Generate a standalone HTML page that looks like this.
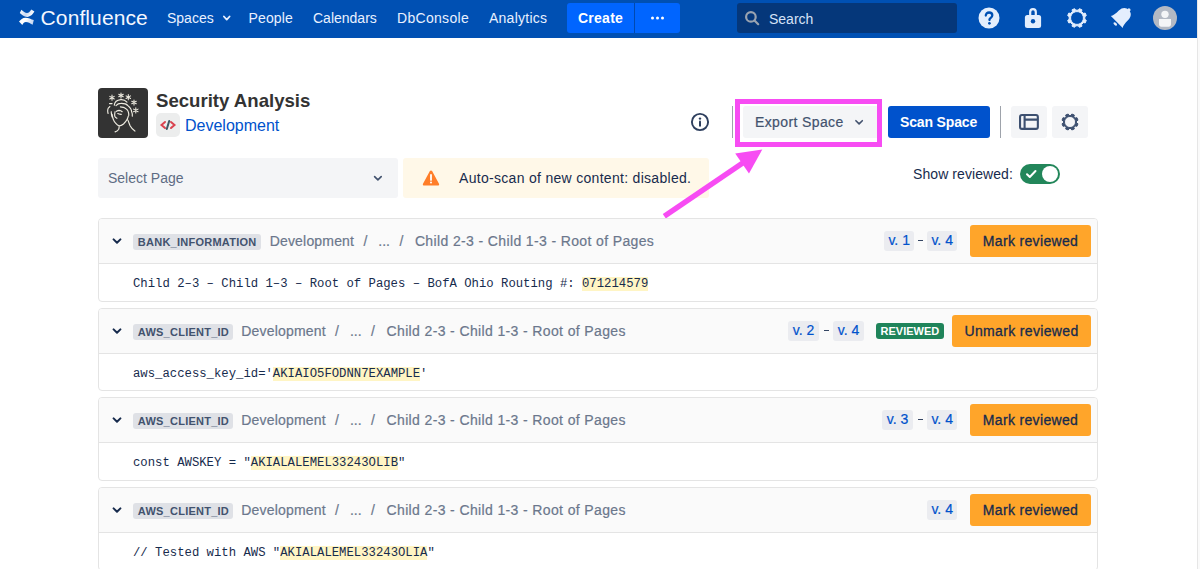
<!DOCTYPE html>
<html><head><meta charset="utf-8">
<style>
*{box-sizing:border-box;margin:0;padding:0}
html,body{width:1200px;height:569px;overflow:hidden;background:#fff;font-family:"Liberation Sans",sans-serif;color:#172B4D}
.a{position:absolute;white-space:nowrap}
#nav{position:absolute;left:0;top:0;width:1197px;height:38px;background:#0050B3}
#sb{position:absolute;left:1197px;top:0;width:3px;height:569px;background:#FAFAFA;border-left:1px solid #E6E6E6}
.nt{position:absolute;font-size:14px;line-height:16px;top:10px;color:#E9F0FF}
.card{position:absolute;left:98px;width:1000px;border:1px solid #E4E4E4;border-radius:4px;background:#fff;overflow:hidden}
.ch{position:absolute;left:0;top:0;width:998px;height:45px;background:#FAFAFA;border-bottom:1px solid #E4E4E4}
.tag{position:absolute;left:34px;top:15px;height:16px;background:#DFE1E6;border-radius:3px;font-size:11px;font-weight:bold;color:#42526E;line-height:16px;padding-left:4.8px;letter-spacing:.25px;white-space:nowrap}
.bc{position:absolute;top:14px;font-size:14px;line-height:16px;color:#6B778C;-webkit-text-stroke:.2px #6B778C;white-space:nowrap}
.code{position:absolute;left:34px;top:57.5px;font-family:"Liberation Mono",monospace;font-size:12.27px;line-height:14px;color:#172B4D;white-space:nowrap}
.hl{background:#FFF5C4}
.ver{position:absolute;top:12px;height:20px;background:#EBECF0;border-radius:3px;color:#0052CC;font-size:14px;line-height:18px;padding:0 4.4px;-webkit-text-stroke:.2px #0052CC;white-space:nowrap}
.dash{position:absolute;top:20.5px;width:5px;height:1.8px;background:#344563}
.rev{position:absolute;left:777px;top:14px;width:67.8px;height:16px;background:#1F845A;border-radius:3px;color:#fff;font-size:11px;font-weight:bold;line-height:16px;text-align:center}
.mark{position:absolute;top:6px;height:32px;background:#FFA52A;border-radius:3px;font-size:14px;letter-spacing:.34px;line-height:33px;-webkit-text-stroke:.3px #172B4D;color:#172B4D;text-align:center;white-space:nowrap}
.chev{position:absolute;left:13px;top:19px}
</style></head><body>
<div id="nav">
  <!-- logo -->
  <svg class="a" style="left:18px;top:8px" width="18" height="18" viewBox="0 0 18 18">
    <defs><linearGradient id="lg1" x1="0" y1="0" x2="1" y2="0.3"><stop offset="0" stop-color="#fff"/><stop offset=".55" stop-color="#C9D9F2"/><stop offset="1" stop-color="#fff"/></linearGradient>
    <linearGradient id="lg2" x1="0" y1="0" x2="1" y2="0.3"><stop offset="0" stop-color="#fff"/><stop offset=".5" stop-color="#fff"/><stop offset="1" stop-color="#C9D9F2"/></linearGradient></defs>
    <path d="M3.4 1.8 C5.5 3.6 7 5 9 5 C10.8 5 12 3.5 13.4 1.6 L16.4 3.6 C14.6 6.4 12.6 8.9 9.2 8.9 C5.8 8.9 3.6 6.8 1.8 5 Z" fill="url(#lg1)"/>
    <path d="M1 13.6 C2.6 11.5 4.6 9.7 7.5 9.7 C10.6 9.7 13 11.2 15.8 12.1 L14.6 16.8 C12 15.4 10.2 14 7.9 14 C6.3 14 5.2 15.2 4.3 16.9 Z" fill="url(#lg2)"/>
  </svg>
  <div class="a" style="left:40.6px;top:6px;font-size:21px;line-height:24px;letter-spacing:.1px;color:#F4F7FF">Confluence</div>
  <div class="nt" style="left:167px">Spaces</div>
  <svg class="a" style="left:222px;top:14px" width="10" height="8" viewBox="0 0 10 8"><path d="M1.9 2.5 4.75 5.6 7.6 2.5" stroke="#E9F0FF" stroke-width="1.8" fill="none" stroke-linecap="round" stroke-linejoin="round"/></svg>
  <div class="nt" style="left:248.5px;letter-spacing:.15px">People</div>
  <div class="nt" style="left:313px">Calendars</div>
  <div class="nt" style="left:397px;letter-spacing:.3px">DbConsole</div>
  <div class="nt" style="left:489px;letter-spacing:.25px">Analytics</div>
  <div class="a" style="left:567px;top:3px;width:113px;height:30px;background:#0065FF;border-radius:3px"></div>
  <div class="a" style="left:634px;top:3px;width:1px;height:30px;background:#0049B0"></div>
  <div class="a" style="left:578px;top:10px;font-size:14px;line-height:16px;font-weight:bold;letter-spacing:.25px;color:#fff">Create</div>
  <svg class="a" style="left:650px;top:16px" width="16" height="4" viewBox="0 0 16 4"><circle cx="2.5" cy="2" r="1.5" fill="#fff"/><circle cx="7.5" cy="2" r="1.5" fill="#fff"/><circle cx="12.5" cy="2" r="1.5" fill="#fff"/></svg>
  <div class="a" style="left:737px;top:3px;width:220px;height:30px;background:#05377A;border-radius:3px"></div>
  <svg class="a" style="left:744px;top:10px" width="16" height="16" viewBox="0 0 16 16"><circle cx="6.9" cy="6.9" r="4.8" stroke="#9AA3B0" stroke-width="2.2" fill="none"/><path d="M10.5 10.5 14.2 14.2" stroke="#9AA3B0" stroke-width="2.2" stroke-linecap="round"/></svg>
  <div class="nt" style="left:769px;top:11px;color:#D5E2F7">Search</div>
  <!-- help -->
  <svg class="a" style="left:978px;top:7px" width="22" height="22" viewBox="0 0 22 22"><circle cx="11" cy="11" r="10.5" fill="#E4EEFD"/><path d="M7.8 8.6c0-1.9 1.4-3.1 3.3-3.1s3.2 1.1 3.2 2.8c0 1.4-.8 2.1-1.7 2.7-.8.5-1.1.9-1.1 1.6v.5" stroke="#0050B3" stroke-width="2.3" fill="none" stroke-linecap="round"/><circle cx="11.4" cy="16.3" r="1.35" fill="#0050B3"/></svg>
  <!-- lock -->
  <svg class="a" style="left:1024px;top:7px" width="18" height="22" viewBox="0 0 18 22"><path d="M6.2 9V5a2.8 2.8 0 0 1 5.6 0V9" stroke="#E4EEFD" stroke-width="2.2" fill="none"/><rect x="0.9" y="8.1" width="16.2" height="13" rx="2.5" fill="#E4EEFD"/><circle cx="9" cy="14.2" r="2.2" fill="#0050B3"/></svg>
  <!-- gear -->
  <svg class="a" style="left:1066px;top:7px" width="22" height="22" viewBox="0 0 22 22"><path fill="#E4EEFD" stroke="#E4EEFD" stroke-width="1" stroke-linejoin="round" fill-rule="evenodd" d="M12.24 3.20 13.39 1.70 15.89 2.74 15.64 4.61 17.39 6.36 19.26 6.11 20.30 8.61 18.80 9.76 18.80 12.24 20.30 13.39 19.26 15.89 17.39 15.64 15.64 17.39 15.89 19.26 13.39 20.30 12.24 18.80 9.76 18.80 8.61 20.30 6.11 19.26 6.36 17.39 4.61 15.64 2.74 15.89 1.70 13.39 3.20 12.24 3.20 9.76 1.70 8.61 2.74 6.11 4.61 6.36 6.36 4.61 6.11 2.74 8.61 1.70 9.76 3.20ZM11 4.60a6.4 6.4 0 1 0 0.01 0Z"/></svg>
  <!-- bell -->
  <svg class="a" style="left:1105px;top:4px" width="30" height="28" viewBox="0 0 30 28"><g transform="translate(11.8 18) rotate(45)" fill="#E4EEFD"><path d="M-8.4 0C-7 -1.6 -6.6 -5 -6.6 -9.5C-6.6 -14.5 -3.6 -17 0 -17C3.6 -17 6.6 -14.5 6.6 -9.5C6.6 -5 7 -1.6 8.4 0Z"/><circle cx="0" cy="-17.2" r="1.6"/><ellipse cx="0.3" cy="2.5" rx="2.1" ry="1.25"/></g></svg>
  <!-- avatar -->
  <svg class="a" style="left:1153px;top:6px" width="24" height="24" viewBox="0 0 24 24"><circle cx="12" cy="12" r="12" fill="#B3B9C4"/><circle cx="12" cy="8.35" r="3.7" fill="#F4F5F7"/><path d="M6 13.1h12v5.4c0 1.2-1 2.2-2.2 2.2H8.2c-1.2 0-2.2-1-2.2-2.2z" fill="#F4F5F7"/></svg>
</div>
<div id="sb"></div>

<!-- header -->
<div class="a" style="left:98px;top:88px;width:50px;height:50px;background:#333;border-radius:4px"></div>
<svg class="a" style="left:98px;top:88px" width="50" height="50" viewBox="0 0 50 50" fill="none" stroke="#EEEBE0" stroke-width="1.15" stroke-linecap="round" stroke-linejoin="round">
  <path stroke-width="1.05" d="M14.00 7.10L14.00 12.30M11.75 8.40L16.25 11.00M16.25 8.40L11.75 11.00M23.00 4.90L23.00 10.10M20.75 6.20L25.25 8.80M25.25 6.20L20.75 8.80M30.30 6.60L30.30 11.80M28.05 7.90L32.55 10.50M32.55 7.90L28.05 10.50M36.00 11.90L36.00 17.10M33.75 13.20L38.25 15.80M38.25 13.20L33.75 15.80M37.80 19.80L37.80 25.00M35.55 21.10L40.05 23.70M40.05 21.10L35.55 23.70M11.5 15.6h2.6"/>
  <path d="M16.3 17.1C16.6 14 19 12 22.8 11.6 25.5 11.3 27.5 12.5 29 14.1M18 17.6C19.5 16 21 15.4 22.8 15.4 26 15.3 28.5 16 29.9 17.6 32 19.5 33.4 21 33.4 22.8 34.2 25 34.5 26.5 34.3 28.1M22.4 18.9C24 19.2 25.5 19.3 26.4 19.8 28.5 21 29.6 22 29.9 22.8 30.6 24.5 30.9 26 30.8 27.2M11.9 18.5C10.3 19.8 9.6 21 9.7 22 9.6 23.5 9.8 24.6 10.1 25.5M13.2 23.7C13.3 25.5 13.6 27.5 14.1 29M14.1 26.4C14.4 28.5 14.8 30.5 15.4 31.6 16 33.3 16.7 34.3 17.6 35.1 18.8 36.5 20 37.5 21.1 37.8 22.8 37.8 24.3 37 25.5 36 27 34.6 28.3 33 29 31.6 29.6 30.4 30 29.2 30.3 28.1M18.5 23.3C19.2 22.8 20.2 22.4 21.1 22.4 22.3 22.5 23.4 23 24.2 23.7M19.8 25.5C20.9 26 22.2 26.2 23.3 26.4M17.1 23.7C16.7 25.3 16.5 26.8 16.7 28.1 17.1 29.1 17.9 29.8 18.9 30.3M21.1 37.8C21.2 39.2 21.1 40.4 20.7 41.3 19.9 42.6 18.6 43.4 17.1 43.9M29.9 32.1C30.7 34 31.3 36 32.1 37.8 33.3 40 34.8 41.7 36.9 43.1"/>
</svg>
<div class="a" style="left:156px;top:90px;font-size:18.6px;line-height:22px;font-weight:bold;color:#333">Security Analysis</div>
<div class="a" style="left:156px;top:113px;width:24px;height:24px;background:#ECEDED;border-radius:5px"></div>
<svg class="a" style="left:156px;top:113px" width="24" height="24" viewBox="0 0 24 24" fill="none" stroke-width="2" stroke-linecap="round"><path d="M9 9 5.5 12 9 15" stroke="#D9434F"/><path d="M15 9l3.5 3L15 15" stroke="#D9434F"/><path d="M13.2 8 10.8 16" stroke="#3D5A66"/></svg>
<div class="a" style="left:185px;top:117px;font-size:16px;line-height:18px;color:#0052CC">Development</div>

<!-- toolbar -->
<svg class="a" style="left:690px;top:112px" width="20" height="20" viewBox="0 0 20 20"><circle cx="10" cy="10" r="8.1" stroke="#2E3F5E" stroke-width="1.9" fill="none"/><circle cx="10" cy="6.6" r="1.2" fill="#2E3F5E"/><path d="M10 9.6v4.2" stroke="#2E3F5E" stroke-width="2" stroke-linecap="round"/></svg>
<div class="a" style="left:732px;top:106px;width:1px;height:32px;background:#9EA3AB"></div>
<div class="a" style="left:743px;top:106px;width:136px;height:32px;background:#F4F5F7;border-radius:3px"></div>
<div class="a" style="left:755px;top:114px;font-size:14px;line-height:16px;letter-spacing:.38px;color:#42526E;-webkit-text-stroke:.2px #42526E">Export Space</div>
<svg class="a" style="left:853px;top:117px" width="12" height="9" viewBox="0 0 12 9"><path d="M2.9 3.7 6.1 6.9 9.3 3.7" stroke="#42526E" stroke-width="1.6" fill="none" stroke-linecap="round" stroke-linejoin="round"/></svg>
<div class="a" style="left:735px;top:99px;width:147px;height:48px;border:5px solid #F74CF3"></div>
<div class="a" style="left:888px;top:106px;width:102px;height:32px;background:#0052CC;border-radius:3px"></div>
<div class="a" style="left:900px;top:114px;font-size:14px;line-height:16px;font-weight:bold;letter-spacing:-.15px;color:#fff">Scan Space</div>
<div class="a" style="left:1000px;top:106px;width:1px;height:32px;background:#9EA3AB"></div>
<div class="a" style="left:1011px;top:106px;width:36px;height:32px;background:#F4F5F7;border-radius:3px"></div>
<svg class="a" style="left:1019px;top:114px" width="20" height="16" viewBox="0 0 20 16" fill="none" stroke="#3D5070" stroke-width="2.1"><rect x="1.05" y="1.05" width="17.8" height="13.8" rx="1.9"/><path d="M5.6 1.05v13.8M5.6 5.6h13.3"/></svg>
<div class="a" style="left:1052px;top:106px;width:36px;height:32px;background:#F4F5F7;border-radius:3px"></div>
<svg class="a" style="left:1061px;top:113px" width="18" height="18" viewBox="0 0 18 18"><path fill="#3D5070" stroke="#3D5070" stroke-width="1" stroke-linejoin="round" fill-rule="evenodd" d="M9.98 2.47 10.85 1.01 13.34 2.04 12.92 3.69 14.31 5.08 15.96 4.66 16.99 7.15 15.53 8.02 15.53 9.98 16.99 10.85 15.96 13.34 14.31 12.92 12.92 14.31 13.34 15.96 10.85 16.99 9.98 15.53 8.02 15.53 7.15 16.99 4.66 15.96 5.08 14.31 3.69 12.92 2.04 13.34 1.01 10.85 2.47 9.98 2.47 8.02 1.01 7.15 2.04 4.66 3.69 5.08 5.08 3.69 4.66 2.04 7.15 1.01 8.02 2.47ZM9 3.50a5.5 5.5 0 1 0 0.01 0Z"/></svg>

<!-- select page / warning -->
<div class="a" style="left:98px;top:158px;width:300px;height:40px;background:#F4F5F7;border-radius:3px"></div>
<div class="a" style="left:108px;top:170px;font-size:14px;line-height:16px;color:#5E6C84">Select Page</div>
<svg class="a" style="left:372px;top:174px" width="12" height="9" viewBox="0 0 12 9"><path d="M2.6 2.6 5.9 5.9 9.2 2.6" stroke="#42526E" stroke-width="1.6" fill="none" stroke-linecap="round" stroke-linejoin="round"/></svg>
<div class="a" style="left:403px;top:158px;width:306px;height:40px;background:#FFF8E8;border-radius:3px"></div>
<svg class="a" style="left:421px;top:168px" width="20" height="20" viewBox="0 0 20 20"><path d="M8.9 3.1c.5-.9 1.7-.9 2.2 0l6.9 12.6c.5.9-.1 1.9-1.1 1.9H3.1c-1 0-1.6-1-1.1-1.9z" fill="#FF7E29"/><path d="M10 7v4.9" stroke="#fff" stroke-width="1.8" stroke-linecap="round"/><circle cx="10" cy="14.6" r="1" fill="#fff"/></svg>
<div class="a" style="left:459px;top:170px;font-size:14px;letter-spacing:.3px;line-height:16px;color:#172B4D">Auto-scan of new content: disabled.</div>
<div class="a" style="left:913px;top:166px;font-size:14px;letter-spacing:.08px;line-height:16px;color:#172B4D">Show reviewed:</div>
<div class="a" style="left:1020px;top:164px;width:40px;height:20px;background:#22865A;border-radius:10px"></div>
<div class="a" style="left:1042px;top:166px;width:16px;height:16px;background:#fff;border-radius:8px"></div>
<svg class="a" style="left:1025px;top:168px" width="13" height="12" viewBox="0 0 13 12"><path d="M2 6.2 4.8 9 10.5 3" stroke="#fff" stroke-width="2" fill="none" stroke-linecap="round" stroke-linejoin="round"/></svg>

<!-- arrow -->
<svg class="a" style="left:0;top:0" width="1200" height="569" viewBox="0 0 1200 569">
  <path d="M664.3 216.2 L746 160.8" stroke="#F74CF3" stroke-width="5.4" stroke-linecap="butt"/>
  <path d="M762.3 149.6 L735.2 153.6 L749 173.4 Z" fill="#F74CF3"/>
</svg>

<!-- cards -->
<div class="card" style="top:218px;height:84px">
  <div class="ch"></div>
  <svg class="chev" width="10" height="7" viewBox="0 0 10 7"><path d="M1.6 1.4 5 4.8 8.4 1.4" stroke="#172B4D" stroke-width="2" fill="none" stroke-linecap="round" stroke-linejoin="round"/></svg>
  <div class="tag" style="width:128px">BANK_INFORMATION</div>
  <div class="bc" style="left:170.7px;letter-spacing:.18px">Development</div>
  <div class="bc" style="left:264.5px">/</div>
  <div class="bc" style="left:279.3px">...</div>
  <div class="bc" style="left:300.5px">/</div>
  <div class="bc" style="left:315.9px;letter-spacing:.37px">Child 2-3 - Child 1-3 - Root of Pages</div>
  <div class="ver" style="left:785px">v. 1</div>
  <div class="ver" style="left:828px">v. 4</div>
  <div class="dash" style="left:818.5px"></div>
  <div class="mark" style="left:871px;width:121px">Mark reviewed</div>
  <div class="code">Child 2–3 – Child 1–3 – Root of Pages – BofA Ohio Routing #: <span class="hl">071214579</span></div>
</div>
<div class="card" style="top:308px;height:83px">
  <div class="ch"></div>
  <svg class="chev" width="10" height="7" viewBox="0 0 10 7"><path d="M1.6 1.4 5 4.8 8.4 1.4" stroke="#172B4D" stroke-width="2" fill="none" stroke-linecap="round" stroke-linejoin="round"/></svg>
  <div class="tag" style="width:99.6px">AWS_CLIENT_ID</div>
  <div class="bc" style="left:142.3px;letter-spacing:.18px">Development</div>
  <div class="bc" style="left:236.1px">/</div>
  <div class="bc" style="left:250.9px">...</div>
  <div class="bc" style="left:272.1px">/</div>
  <div class="bc" style="left:287.5px;letter-spacing:.37px">Child 2-3 - Child 1-3 - Root of Pages</div>
  <div class="ver" style="left:689.3px">v. 2</div>
  <div class="ver" style="left:734.3px">v. 4</div>
  <div class="dash" style="left:724.5px"></div>
  <div class="rev">REVIEWED</div>
  <div class="mark" style="left:853px;width:139px">Unmark reviewed</div>
  <div class="code">aws_access_key_id='<span class="hl">AKIAIO5FODNN7EXAMPLE</span>'</div>
</div>
<div class="card" style="top:397px;height:84px">
  <div class="ch"></div>
  <svg class="chev" width="10" height="7" viewBox="0 0 10 7"><path d="M1.6 1.4 5 4.8 8.4 1.4" stroke="#172B4D" stroke-width="2" fill="none" stroke-linecap="round" stroke-linejoin="round"/></svg>
  <div class="tag" style="width:99.6px">AWS_CLIENT_ID</div>
  <div class="bc" style="left:142.3px;letter-spacing:.18px">Development</div>
  <div class="bc" style="left:236.1px">/</div>
  <div class="bc" style="left:250.9px">...</div>
  <div class="bc" style="left:272.1px">/</div>
  <div class="bc" style="left:287.5px;letter-spacing:.37px">Child 2-3 - Child 1-3 - Root of Pages</div>
  <div class="ver" style="left:783.3px">v. 3</div>
  <div class="ver" style="left:828px">v. 4</div>
  <div class="dash" style="left:818.5px"></div>
  <div class="mark" style="left:871px;width:121px">Mark reviewed</div>
  <div class="code">const AWSKEY = "<span class="hl">AKIALALEMEL33243OLIB</span>"</div>
</div>
<div class="card" style="top:487px;height:84px">
  <div class="ch"></div>
  <svg class="chev" width="10" height="7" viewBox="0 0 10 7"><path d="M1.6 1.4 5 4.8 8.4 1.4" stroke="#172B4D" stroke-width="2" fill="none" stroke-linecap="round" stroke-linejoin="round"/></svg>
  <div class="tag" style="width:99.6px">AWS_CLIENT_ID</div>
  <div class="bc" style="left:142.3px;letter-spacing:.18px">Development</div>
  <div class="bc" style="left:236.1px">/</div>
  <div class="bc" style="left:250.9px">...</div>
  <div class="bc" style="left:272.1px">/</div>
  <div class="bc" style="left:287.5px;letter-spacing:.37px">Child 2-3 - Child 1-3 - Root of Pages</div>
  <div class="ver" style="left:828px">v. 4</div>
  <div class="mark" style="left:871px;width:121px">Mark reviewed</div>
  <div class="code">// Tested with AWS "<span class="hl">AKIALALEMEL33243OLIA</span>"</div>
</div>
</body></html>
